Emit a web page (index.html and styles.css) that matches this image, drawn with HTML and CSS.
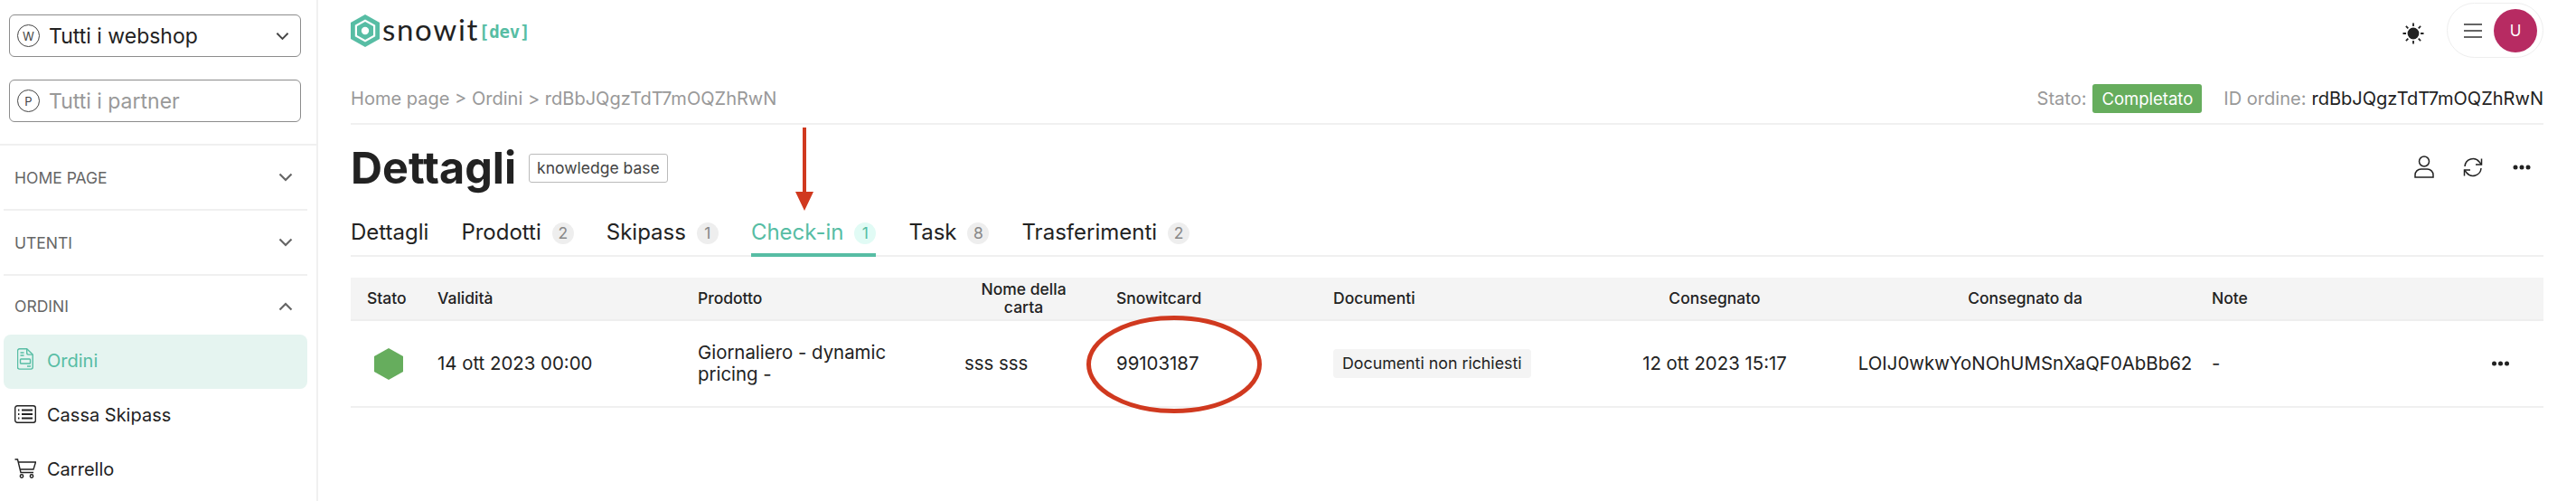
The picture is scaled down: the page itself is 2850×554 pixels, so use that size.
FILE: index.html
```html
<!DOCTYPE html>
<html lang="it">
<head>
<meta charset="utf-8">
<title>Dettagli ordine</title>
<link rel="stylesheet" href="styles.css">
</head>
<body>
<div class="app">
  <aside class="sidebar">
    <div class="pickers">
      <div class="picker">
        <span class="round-ico">W</span><span class="picker-text">Tutti i webshop</span>
        <svg class="chev-sel" viewBox="0 0 16 10"><path d="M1.5 1.5 8 8l6.5-6.5"/></svg>
      </div>
      <div class="picker">
        <span class="round-ico">P</span><span class="picker-text muted">Tutti i partner</span>
      </div>
    </div>
    <div class="section first"><span>HOME PAGE</span><svg class="chev" viewBox="0 0 16 10"><path d="M1.5 1.5 8 8l6.5-6.5"/></svg></div>
    <div class="section"><span>UTENTI</span><svg class="chev" viewBox="0 0 16 10"><path d="M1.5 1.5 8 8l6.5-6.5"/></svg></div>
    <div class="section"><span>ORDINI</span><svg class="chev" viewBox="0 0 16 10"><path d="M1.5 8.5 8 2l6.5 6.5"/></svg></div>
    <nav class="menu">
      <a class="item active">
        <svg class="item-ico doc" viewBox="0 0 18 24"><path d="M2.5.8h8.2l6.5 6.3v14a2 2 0 0 1-2 2H2.5a2 2 0 0 1-2-2V2.8a2 2 0 0 1 2-2Z"/><path d="M10.7 1v4.3a1.8 1.8 0 0 0 1.8 1.8h4.5M3.5 5h4M3.5 8h4M11 20h4"/><rect x="3.5" y="12" width="11" height="5" rx=".8"/></svg>
        <span>Ordini</span>
      </a>
      <a class="item">
        <svg class="item-ico list" viewBox="0 0 24 20"><rect x=".7" y=".7" width="22.6" height="18.6" rx="2.5"/><path d="M8 5.5h12M8 10h12M8 14.5h12" stroke-width="1.8"/><path d="M4 5.5h1.4M4 10h1.4M4 14.5h1.4" stroke-width="1.8"/></svg>
        <span>Cassa Skipass</span>
      </a>
      <a class="item">
        <svg class="item-ico cart" viewBox="0 0 24 22"><path d="M.5 1h3l3.5 14.5h14M4.5 4h19l-2.5 8H6.5"/><circle cx="8" cy="19.500" r="1.700"/><circle cx="19" cy="19.500" r="1.700"/></svg>
        <span>Carrello</span>
      </a>
    </nav>
  </aside>

  <main class="content">
    <header class="topbar">
      <div class="logo">
        <svg class="logo-mark" viewBox="0 0 32 36"><path d="M16 0 32 9v18l-16 9L0 27V9Z" fill="#57bda4"/><path d="M16 5.500 27.200 11.800v12.400L16 30.500 4.800 24.200V11.800Z" fill="#fff"/><path d="M16 8 25 13v10l-9 5-9-5V13Z" fill="#57bda4"/><circle cx="16" cy="18" r="4.200" fill="#fff"/></svg>
        <span class="logo-word">snowit</span><span class="logo-dev">[dev]</span>
      </div>
      <div class="top-actions">
        <svg class="sun" viewBox="0 0 24 24"><circle cx="12" cy="12" r="5.500" fill="#222"/><path d="M12 .5v3.500M12 20v3.500M.5 12H4M20 12h3.500M3.900 3.900l2.400 2.400M17.700 17.700l2.400 2.400M3.900 20.100l2.400-2.400M17.700 6.300l2.400-2.400"/></svg>
        <div class="user-pill">
          <svg class="burger" viewBox="0 0 20 16"><path d="M0 1h20M0 8h20M0 15h20"/></svg>
          <span class="avatar">U</span>
        </div>
      </div>
    </header>

    <div class="crumbs">
      <div class="crumb-path">Home page &gt; Ordini &gt; rdBbJQgzTdT7mOQZhRwN</div>
      <div class="meta">
        <span>Stato:</span><span class="status-tag">Completato</span>
        <span class="order-id">ID ordine:</span><span class="dark">rdBbJQgzTdT7mOQZhRwN</span>
      </div>
    </div>

    <div class="title-row">
      <h1>Dettagli</h1>
      <span class="kb">knowledge base</span>
      <div class="title-actions">
        <svg class="act-user" viewBox="0 0 22 25"><circle cx="11" cy="6.500" r="5.500"/><path d="M1 24v-2.500A6.500 6.500 0 0 1 7.500 15h7a6.500 6.500 0 0 1 6.500 6.500V24Z"/></svg>
        <svg class="act-sync" viewBox="0 0 22 22"><path d="M2 10a9 9 0 0 1 16-5l2.500 3M20 12a9 9 0 0 1-16 5l-2.500-3"/><path d="M20.500 1.500V8H14M1.500 20.500V14H8"/></svg>
        <svg class="act-dots" viewBox="0 0 20 6"><circle cx="3" cy="3" r="2.500"/><circle cx="10" cy="3" r="2.500"/><circle cx="17" cy="3" r="2.500"/></svg>
      </div>
    </div>

    <div class="tabs">
      <div class="tab">Dettagli</div>
      <div class="tab">Prodotti<span class="count">2</span></div>
      <div class="tab">Skipass<span class="count">1</span></div>
      <div class="tab on">Check-in<span class="count">1</span></div>
      <div class="tab">Task<span class="count">8</span></div>
      <div class="tab">Trasferimenti<span class="count">2</span></div>
    </div>

    <div class="grid head">
      <div>Stato</div><div>Validità</div><div>Prodotto</div><div class="c-name">Nome della carta</div><div>Snowitcard</div><div>Documenti</div><div class="c-mid">Consegnato</div><div class="c-mid">Consegnato da</div><div>Note</div><div></div>
    </div>
    <div class="grid row">
      <div><svg class="hex" viewBox="0 0 32 35"><path d="M16 0 32 9v17l-16 9L0 26V9Z"/></svg></div>
      <div>14 ott 2023 00:00</div>
      <div class="c-prod">Giornaliero - dynamic pricing -</div>
      <div>sss sss</div>
      <div>99103187</div>
      <div><span class="doc-tag">Documenti non richiesti</span></div>
      <div class="c-mid">12 ott 2023 15:17</div>
      <div class="c-mid">LOIJ0wkwYoNOhUMSnXaQF0AbBb62</div>
      <div>-</div>
      <div class="c-act"><svg class="row-dots" viewBox="0 0 20 6"><circle cx="3" cy="3" r="2.500"/><circle cx="10" cy="3" r="2.500"/><circle cx="17" cy="3" r="2.500"/></svg></div>
    </div>
  </main>
</div>

<svg class="mark-arrow" viewBox="0 0 20 92"><path d="M8 0h4v71h8l-10 21L0 71h8Z"/></svg>
<svg class="mark-ring" viewBox="0 0 194 108"><ellipse cx="97" cy="54" rx="94.500" ry="51.500"/></svg>
</body>
</html>
```
FILE: styles.css
```css
* { box-sizing: border-box; }
html, body { margin: 0; height: 554px; overflow: hidden; background: #fff; }
body { font-family: Inter, "Liberation Sans", sans-serif; color: #222; position: relative; }
svg { display: block; flex: none; }

.app { display: flex; height: 554px; }
.sidebar { width: 352px; flex: none; border-right: 2px solid #f0f0f0; }

.pickers { display: flex; flex-direction: column; gap: 25px; padding: 16px 17px 0 10px; }
.picker { height: 47px; border: 1.500px solid #8c8c8c; border-radius: 6px; display: flex; align-items: center; padding-left: 8px; }
.round-ico { width: 25px; height: 25px; border: 1.500px solid #444; border-radius: 50%; font-size: 13px; display: flex; align-items: center; justify-content: center; color: #444; flex: none; }
.picker-text { font-size: 23px; margin-left: 10px; flex: 1; white-space: nowrap; }
.muted { color: #999; }
.chev-sel { width: 15px; height: 10px; margin-right: 12px; fill: none; stroke: #444; stroke-width: 2; }

.section { height: 72px; display: flex; align-items: center; justify-content: space-between; padding: 0 16px 0 12px; font-size: 17.500px; color: #666; border-top: 2px solid #f0f0f0; margin: 0 10px 0 4px; }
.section.first { margin: 24px 0 0; padding: 0 26px 0 16px; }
.section:last-of-type { height: 67px; padding-top: 2px; }
.chev { width: 16px; height: 10px; fill: none; stroke: #666; stroke-width: 2.200; }

.menu { display: flex; flex-direction: column; margin: 0 10px 0 4px; }
.item { height: 60px; display: flex; align-items: center; font-size: 20px; padding-left: 48px; padding-bottom: 2px; position: relative; }
.item.active { background: #e5f4f0; border-radius: 8px; color: #57bda4; }
.item-ico { position: absolute; left: 12px; fill: none; stroke: #222; stroke-width: 1.400; }
.doc { width: 18px; height: 24px; left: 15px; top: 15px; stroke: #57bda4; }
.list { width: 24px; height: 20px; top: 18px; }
.cart { width: 24px; height: 22px; top: 17px; }

.content { flex: 1; min-width: 0; padding: 0 36px 0 36px; }
.topbar { height: 81px; display: flex; justify-content: space-between; padding-top: 16px; }
.logo { display: flex; align-items: flex-start; }
.logo-mark { width: 32px; height: 36px; }
.logo-word { font-family: Lato, sans-serif; font-size: 33px; line-height: 33px; letter-spacing: 1.700px; margin-left: 3px; color: #222; }
.logo-dev { font-family: "DejaVu Sans Mono", monospace; font-weight: 700; font-size: 19px; line-height: 34px; margin: 2px 0 0 0; color: #57bda4; letter-spacing: -.2px; }
.top-actions { display: flex; align-items: flex-start; margin-top: -13px; }
.sun { width: 24px; height: 24px; margin: 22px 25px 0 0; stroke: #222; stroke-width: 1.800; fill: none; }
.user-pill { width: 107px; height: 61px; border: 1.500px solid #eee; border-radius: 31px; display: flex; align-items: center; padding: 0 6px 0 18px; justify-content: space-between; }
.burger { width: 20px; height: 16px; fill: none; stroke: #333; stroke-width: 1.300; }
.avatar { width: 48px; height: 48px; border-radius: 50%; background: #b72b62; color: #fff; display: flex; align-items: center; justify-content: center; font-size: 17px; }

.crumbs { height: 57px; border-bottom: 2px solid #f0f0f0; display: flex; justify-content: space-between; align-items: flex-start; padding-top: 12px; font-size: 20.050px; color: #999; }
.crumb-path { line-height: 32px; white-space: nowrap; }
.meta { display: flex; align-items: center; height: 32px; white-space: nowrap; }
.status-tag { background: #66ad5d; color: #fff; height: 32px; line-height: 32px; border-radius: 3px; padding: 0 10px; margin-left: 7px; font-size: 18.500px; }
.order-id { margin: 0 6px 0 24px; }
.dark { color: #222; }

.title-row { height: 101px; display: flex; align-items: flex-start; padding-top: 18px; }
h1 { font-size: 48.500px; font-weight: 700; margin: 0; line-height: 60px; color: #222; }
.kb { margin: 14px 0 0 14px; height: 32px; line-height: 30px; border: 1px solid #bbb; border-radius: 3px; padding: 0 8px; font-size: 17.500px; color: #444; white-space: nowrap; }
.title-actions { margin: 16px 14px 0 auto; display: flex; align-items: center; }
.act-user { width: 22px; height: 25px; fill: none; stroke: #222; stroke-width: 1.500; }
.act-sync { width: 22px; height: 22px; margin-left: 32px; fill: none; stroke: #222; stroke-width: 1.500; }
.act-dots { width: 20px; height: 6px; margin-left: 33px; fill: #222; }

.tabs { height: 45px; display: flex; gap: 36px; border-bottom: 2px solid #f0f0f0; font-size: 24px; }
.tab { height: 45px; display: flex; align-items: flex-start; padding-top: 3px; white-space: nowrap; line-height: 30px; }
.tab.on { color: #57bda4; border-bottom: 4px solid #57bda4; }
.count { width: 24px; height: 24px; margin: 4px 0 0 12px; border-radius: 50%; background: #eee; color: #888; font-size: 17.500px; line-height: 24px; text-align: center; }
.on .count { background: #e1fbf5; color: #57bda4; }

.grid { display: grid; grid-template-columns: 78px 288px 295px 168px 240px 285px 274px 413px 293px 1fr; align-items: center; padding-left: 18px; }
.head { margin-top: 23px; height: 48px; background: #f4f4f4; border-bottom: 2px solid #eee; font-size: 17.500px; font-weight: 500; line-height: 20px; }
.row { height: 96px; border-bottom: 2px solid #f0f0f0; font-size: 20.400px; line-height: 24px; }
.c-name { text-align: center; padding: 0 36px 0 0; margin-left: -1px; }
.c-mid { text-align: center; white-space: nowrap; }
.c-prod { max-width: 250px; }
.hex { width: 32px; height: 35px; margin-left: 8px; fill: #66ad5d; }
.doc-tag { display: inline-block; height: 32px; line-height: 32px; padding: 0 10px; background: #f4f4f4; border-radius: 4px; font-size: 17.800px; white-space: nowrap; }
.row-dots { width: 21px; height: 6px; margin-left: 16px; fill: #222; }

.mark-arrow { position: absolute; left: 880px; top: 141px; width: 20px; height: 92px; fill: #d0391f; }
.mark-ring { position: absolute; left: 1202px; top: 349px; width: 194px; height: 108px; fill: none; stroke: #d0391f; stroke-width: 5; }
```
